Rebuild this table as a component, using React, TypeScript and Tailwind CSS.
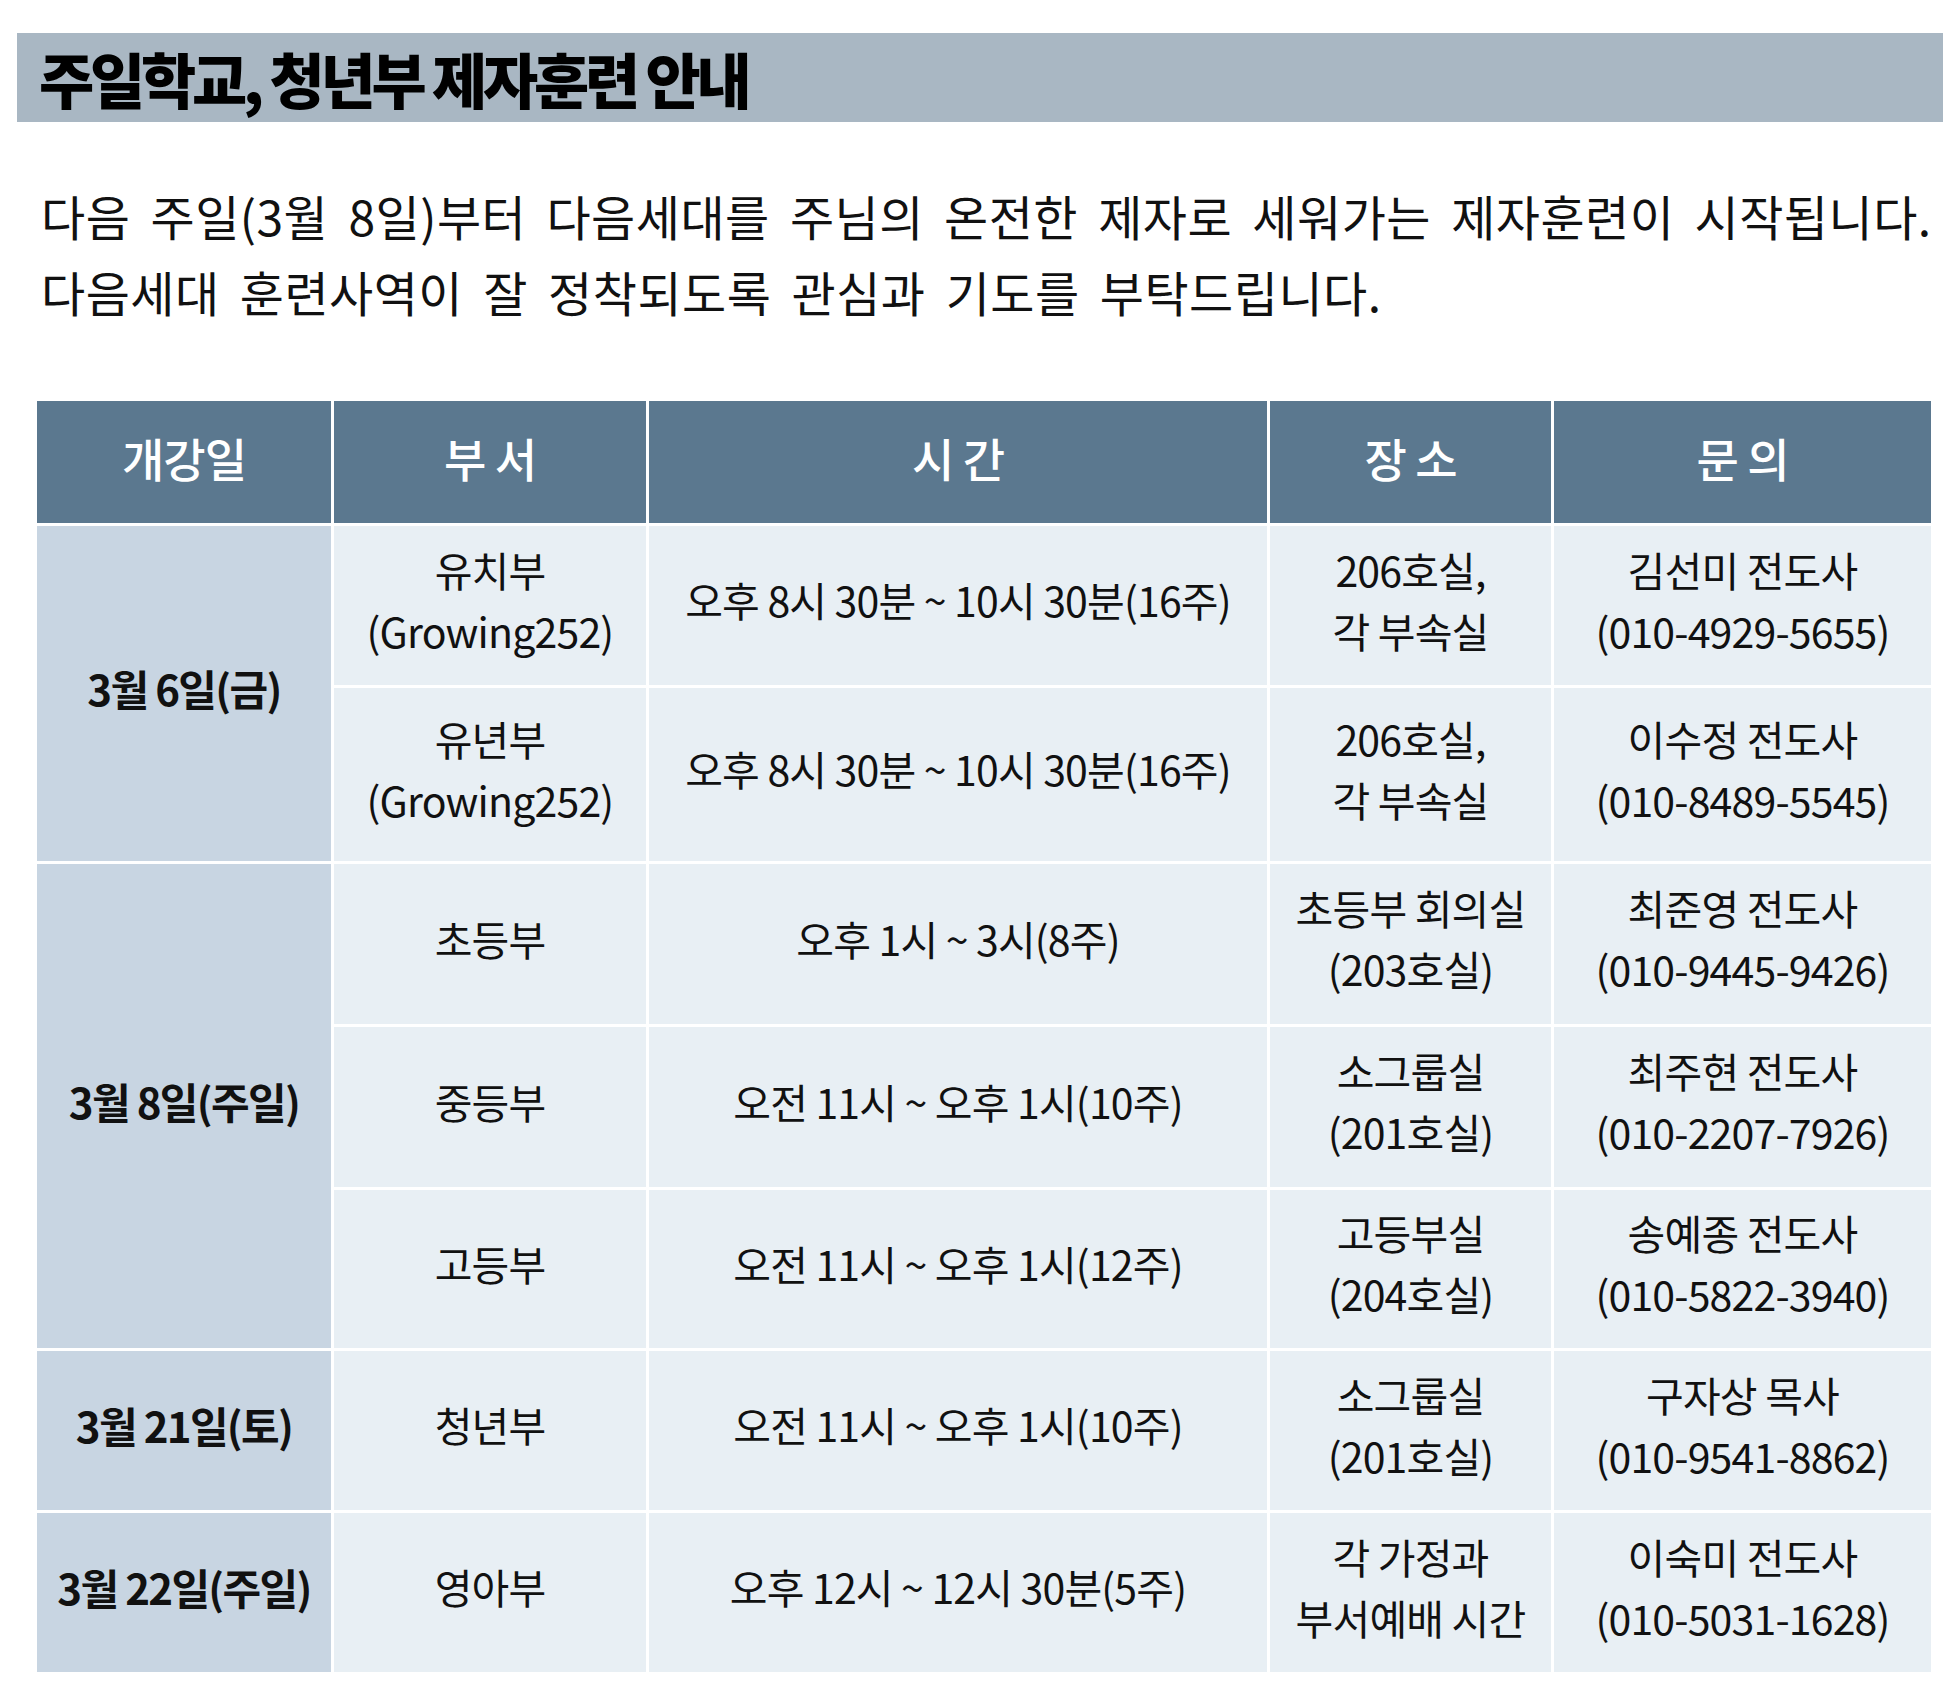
const font = { fontFamily: '"Noto Sans CJK KR", "Noto Sans", sans-serif' };

type Row = {
  dept: string[];
  time: string;
  place: string[];
  contact: string[];
};

const groups: { date: string; rows: Row[] }[] = [
  {
    date: '3월 6일(금)',
    rows: [
      {
        dept: ['유치부', '(Growing252)'],
        time: '오후 8시 30분 ~ 10시 30분(16주)',
        place: ['206호실,', '각 부속실'],
        contact: ['김선미 전도사', '(010-4929-5655)'],
      },
      {
        dept: ['유년부', '(Growing252)'],
        time: '오후 8시 30분 ~ 10시 30분(16주)',
        place: ['206호실,', '각 부속실'],
        contact: ['이수정 전도사', '(010-8489-5545)'],
      },
    ],
  },
  {
    date: '3월 8일(주일)',
    rows: [
      {
        dept: ['초등부'],
        time: '오후 1시 ~ 3시(8주)',
        place: ['초등부 회의실', '(203호실)'],
        contact: ['최준영 전도사', '(010-9445-9426)'],
      },
      {
        dept: ['중등부'],
        time: '오전 11시 ~ 오후 1시(10주)',
        place: ['소그룹실', '(201호실)'],
        contact: ['최주현 전도사', '(010-2207-7926)'],
      },
      {
        dept: ['고등부'],
        time: '오전 11시 ~ 오후 1시(12주)',
        place: ['고등부실', '(204호실)'],
        contact: ['송예종 전도사', '(010-5822-3940)'],
      },
    ],
  },
  {
    date: '3월 21일(토)',
    rows: [
      {
        dept: ['청년부'],
        time: '오전 11시 ~ 오후 1시(10주)',
        place: ['소그룹실', '(201호실)'],
        contact: ['구자상 목사', '(010-9541-8862)'],
      },
    ],
  },
  {
    date: '3월 22일(주일)',
    rows: [
      {
        dept: ['영아부'],
        time: '오후 12시 ~ 12시 30분(5주)',
        place: ['각 가정과', '부서예배 시간'],
        contact: ['이숙미 전도사', '(010-5031-1628)'],
      },
    ],
  },
];

const spans = ['row-span-1', 'row-span-2', 'row-span-3'];

function Cell({ lines }: { lines: string[] }) {
  return (
    <div className="flex flex-col items-center justify-center pb-[12px] bg-[#e8eff4] text-[41px] leading-[61px] text-[#111] tracking-[-0.02em]">
      {lines.map(l => (
        <span key={l}>{l}</span>
      ))}
    </div>
  );
}

export default function App() {
  return (
    <div className="w-[1955px] h-[1698px] bg-white pt-[33px]" style={font}>
      {/* Title */}
      <div className="ml-[17px] w-[1926px] h-[89px] bg-[#a9b7c3] flex items-center pl-[22px]">
        <h1 className="text-[60px] font-black text-black tracking-[-0.07em] leading-none">
          주일학교, 청년부 제자훈련 안내
        </h1>
      </div>

      {/* Intro */}
      <div className="ml-[41px] mt-[55px] text-[48px] leading-[76px] text-[#111] tracking-[0.01em] [word-spacing:9px] whitespace-nowrap">
        <p>다음 주일(3월 8일)부터 다음세대를 주님의 온전한 제자로 세워가는 제자훈련이 시작됩니다.</p>
        <p>다음세대 훈련사역이 잘 정착되도록 관심과 기도를 부탁드립니다.</p>
      </div>

      {/* Schedule table */}
      <div className="ml-[37px] mt-[72px] grid grid-cols-[294px_312px_618px_281px_377px] grid-rows-[122px_159px_173px_160px_160px_158px_159px_159px] gap-[3px]">
        {['개강일', '부 서', '시 간', '장 소', '문 의'].map(h => (
          <div key={h} className="bg-[#5b788f] flex items-center justify-center pb-[10px] text-white text-[46px] font-medium tracking-[-0.02em]">
            {h}
          </div>
        ))}
        {groups.map(g => (
          <>
            {g.rows.map((r, i) => (
              <>
                {i === 0 && (
                  <div key={g.date} className={`${spans[g.rows.length - 1]} bg-[#c8d5e2] flex items-center justify-center pb-[12px] text-[42px] font-bold text-[#111] tracking-[-0.04em]`}>
                    {g.date}
                  </div>
                )}
                <Cell lines={r.dept} />
                <Cell lines={[r.time]} />
                <Cell lines={r.place} />
                <Cell lines={r.contact} />
              </>
            ))}
          </>
        ))}
      </div>
    </div>
  );
}
